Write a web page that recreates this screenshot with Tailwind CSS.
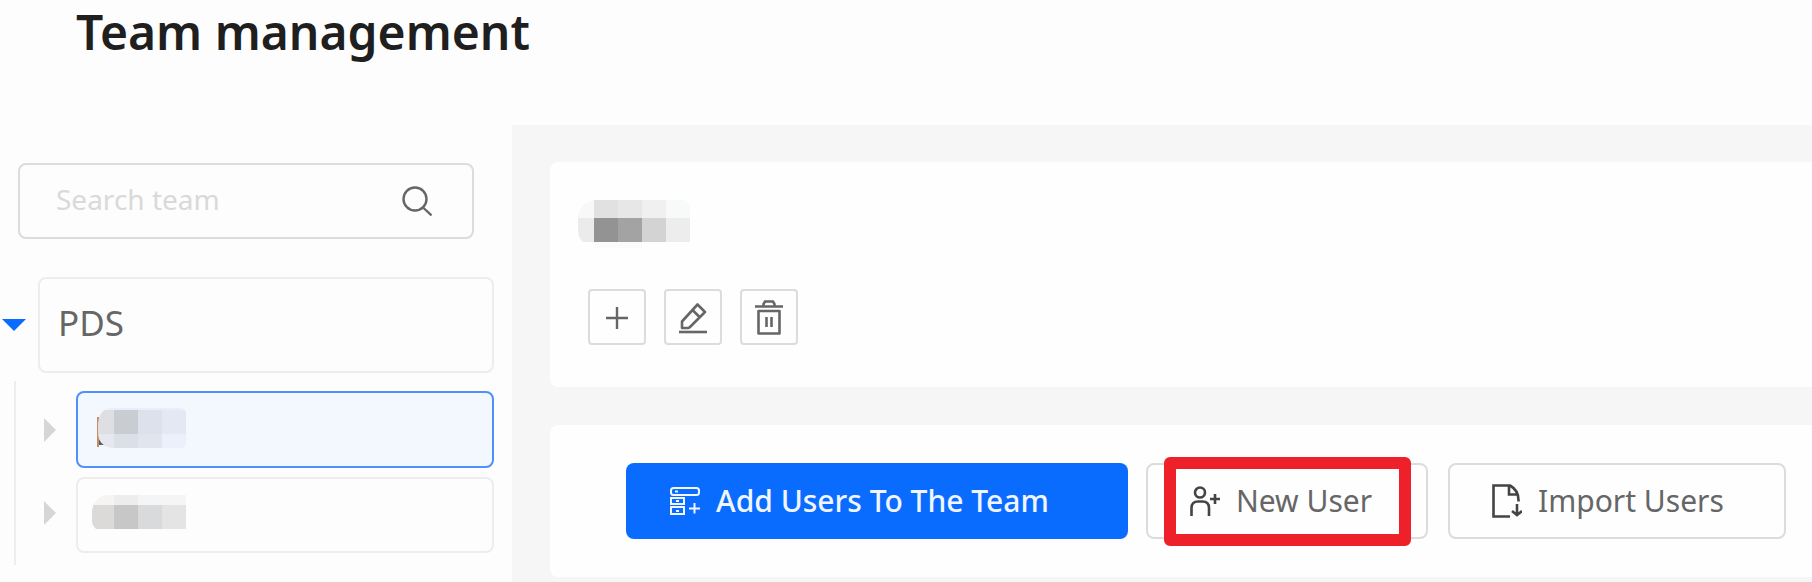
<!DOCTYPE html>
<html lang="en">
<head>
  <meta charset="UTF-8">
  <meta name="viewport" content="width=device-width, initial-scale=1.0">
  <title>Team management</title>
  <script src="https://cdn.jsdelivr.net/npm/@tailwindcss/browser@4"></script>
</head>
<body class="min-h-screen flex flex-col bg-[#fdfdfd] font-['Noto_Sans','Open_Sans',sans-serif] text-[#666] overflow-hidden">

  <!-- Header -->
  <header class="h-[125px] px-[76px]">
    <h1 class="text-[48px] leading-[64px] font-semibold text-[#1f1f1f]">Team management</h1>
  </header>

  <div class="flex flex-1">
    <!-- Sidebar -->
    <aside class="w-[512px] shrink-0 pt-[38px]">
      <form class="ml-[18px] mr-[38px] h-[76px] flex items-center border-2 border-[#dcdcdc] rounded-lg pl-9 pr-10">
        <input type="text" aria-label="Search team" placeholder="Search team" class="flex-1 min-w-0 pb-1 text-[28px] leading-10 placeholder:text-[#d9d9d9] outline-none">
        <button type="submit" aria-label="Search">
          <svg class="w-8 h-8" viewBox="0 0 32 32" fill="none" stroke="#666" stroke-width="2.400">
            <circle cx="15" cy="14" r="11.500"/>
            <path d="M23 22.500l8.500 8"/>
          </svg>
        </button>
      </form>

      <!-- Team tree -->
      <ul class="mt-[38px] pr-[18px]">
        <li>
          <div class="flex items-center">
            <button class="w-[38px] pl-[2px]" aria-label="Collapse PDS">
              <svg class="w-6 h-3" viewBox="0 0 24 12" fill="#0a6cff"><path d="M0 0h24L12 12z"/></svg>
            </button>
            <button class="flex-1 h-24 border-2 border-[#ededed] rounded-lg px-[18px] pb-1 text-left text-[35px] leading-10">PDS</button>
          </div>
          <ul class="ml-[14px] mt-2 pt-[10px] pb-3 border-l-2 border-[#eee] space-y-[9px]">
            <li class="flex items-center">
              <button class="w-[60px] pl-7" aria-label="Expand team">
                <svg class="w-3 h-6" viewBox="0 0 12 24" fill="#d6d6d6"><path d="M0 0v24l12-12z"/></svg>
              </button>
              <button class="flex-1 h-[77px] border-2 border-[#4f90fc] bg-[#f3f8ff] rounded-lg pl-[14px] pb-1" aria-label="Selected team">
                <svg class="w-24 h-10" viewBox="0 0 96 40">
                  <path d="M5 9h2v30H5z" fill="#c98b62"/>
                  <path d="M7 31l6 6H7z" fill="#555e68"/>
                  <clipPath id="mask-a"><path d="M20 0h68q6 0 6 6v28q0 6-6 6H20Q6 38 6 24v-9Q8 0 20 0z"/></clipPath>
                  <g clip-path="url(#mask-a)">
                    <path d="M6 0h88v2H6z" fill="#e8effc"/>
                    <path d="M6 2h16v24H6z" fill="#dedfe2"/>
                    <path d="M22 2h24v24H22z" fill="#c9ccd0"/>
                    <path d="M46 2h24v24H46z" fill="#dce1eb"/>
                    <path d="M70 2h24v24H70z" fill="#e4e8f2"/>
                    <path d="M6 26h16v14H6z" fill="#e5e8ef"/>
                    <path d="M22 26h24v14H22z" fill="#dbdfe8"/>
                    <path d="M46 26h24v14H46z" fill="#e0e5ee"/>
                    <path d="M70 26h24v14H70z" fill="#ecf0fb"/>
                  </g>
                </svg>
              </button>
            </li>
            <li class="flex items-center">
              <button class="w-[60px] pl-7 pb-1" aria-label="Expand team">
                <svg class="w-3 h-6" viewBox="0 0 12 24" fill="#d6d6d6"><path d="M0 0v24l12-12z"/></svg>
              </button>
              <button class="flex-1 h-[76px] border-2 border-[#ededed] rounded-lg pl-[14px] pb-1" aria-label="Team">
                <svg class="w-24 h-10" viewBox="0 0 96 40">
                  <clipPath id="mask-b"><path d="M18 2h76v34H4Q0 32 0 28V18Q2 2 18 2z"/></clipPath>
                  <g clip-path="url(#mask-b)">
                    <path d="M0 2h22v10H0z" fill="#f4f4f4"/>
                    <path d="M22 2h24v10H22z" fill="#ededed"/>
                    <path d="M46 2h48v10H46z" fill="#f5f5f5"/>
                    <path d="M0 12h22v24H0z" fill="#dbdad9"/>
                    <path d="M22 12h24v24H22z" fill="#c7c7c7"/>
                    <path d="M46 12h24v24H46z" fill="#d9dadb"/>
                    <path d="M70 12h24v24H70z" fill="#e4e4e4"/>
                  </g>
                </svg>
              </button>
            </li>
          </ul>
        </li>
      </ul>
    </aside>

    <!-- Main content -->
    <main class="flex-1 min-w-0 bg-[#f6f6f6] pt-[37px] pl-[38px] space-y-[38px]">
      <section class="h-[225px] bg-[#fefefe] rounded-l-lg pl-7 pt-[38px]">
        <svg class="w-28 h-12" viewBox="0 0 112 48">
          <clipPath id="mask-c"><path d="M16 0h90q6 2 6 8v34H5Q0 38 0 30V16Q2 2 16 0z"/></clipPath>
          <g clip-path="url(#mask-c)">
            <path d="M0 0h16v18H0z" fill="#f8f8f8"/>
            <path d="M16 0h24v18H16z" fill="#e1e1e1"/>
            <path d="M40 0h24v18H40z" fill="#e7e7e7"/>
            <path d="M64 0h24v18H64z" fill="#f0f0f0"/>
            <path d="M88 0h24v18H88z" fill="#f8fafa"/>
            <path d="M0 18h16v24H0z" fill="#ebebeb"/>
            <path d="M16 18h24v24H16z" fill="#939393"/>
            <path d="M40 18h24v24H40z" fill="#a3a3a3"/>
            <path d="M64 18h24v24H64z" fill="#d3d3d3"/>
            <path d="M88 18h24v24H88z" fill="#ededed"/>
          </g>
          <path d="M16 42h48v6H16z" fill="#fbfbfb"/>
        </svg>
        <div class="mt-[41px] ml-[10px] flex gap-[18px]">
          <button class="w-[58px] h-14 flex items-center justify-center border-2 border-[#dcdcdc] rounded-sm" aria-label="Add team">
            <svg class="w-8 h-9" viewBox="0 0 32 36" fill="none" stroke="#666" stroke-width="2.400"><path d="M16 8v22M5 19h22"/></svg>
          </button>
          <button class="w-[58px] h-14 flex items-center justify-center border-2 border-[#dcdcdc] rounded-sm" aria-label="Rename team">
            <svg class="w-8 h-9" viewBox="0 0 32 36" fill="none" stroke="#666" stroke-width="2.600">
              <path d="M2 33h28"/>
              <path d="M5 28.500v-6L20.500 5.500l7.500 7.500L13 28q-1 1-2 1H5zM15.500 11l7.500 7.500" stroke-linejoin="round"/>
            </svg>
          </button>
          <button class="w-[58px] h-14 flex items-center justify-center border-2 border-[#dcdcdc] rounded-sm" aria-label="Delete team">
            <svg class="w-8 h-9" viewBox="0 0 32 36" fill="none" stroke="#666" stroke-width="2.600">
              <path d="M2 7.500h28M10.500 7.500V5l1.500-2.500h8L21.500 5v2.500"/>
              <path d="M5.500 12h21v22.500h-21z" stroke-linejoin="round"/>
              <path d="M13.500 18v10M18.500 18v10"/>
            </svg>
          </button>
        </div>
      </section>

      <section class="h-[152px] bg-[#fefefe] rounded-l-lg pl-[76px] pt-[38px]">
        <div class="flex text-[30px] leading-10 whitespace-nowrap">
          <button class="w-[502px] h-[76px] flex items-center gap-4 pl-11 bg-[#0a6cff] text-[#f0f5ff] font-medium rounded-lg">
            <svg class="w-[30px] h-7 shrink-0" viewBox="0 0 30 28" fill="none" stroke="currentColor" stroke-width="2">
              <rect x="1" y="1" width="28" height="7" rx="2.500"/>
              <rect x="1" y="11" width="13" height="6"/>
              <rect x="1" y="20" width="13" height="7"/>
              <path d="M5 4.500h3M6 14h3M6 24h3M24.500 16v10.500M19 21.500h11"/>
            </svg>
            Add Users To The Team
          </button>
          <div class="relative ml-[18px]">
            <button class="w-[282px] h-[76px] flex items-center gap-4 pl-[42px] border-2 border-[#dcdcdc] rounded-lg">
              <svg class="w-[30px] h-[30px] shrink-0" viewBox="0 0 30 30" fill="none" stroke="#444" stroke-width="2.600">
                <circle cx="10" cy="6.500" r="5"/>
                <path d="M1.500 30V22q0-6.500 6.500-6.500h4.500q6.500 0 6.500 6.500v8"/>
                <path d="M25 8v10M20 13h10"/>
              </svg>
              New User
            </button>
            <!-- Highlight frame -->
            <div class="absolute -top-[6px] left-[18px] w-[247px] h-[89px] border-12 border-[#ee2029] rounded-md pointer-events-none"></div>
          </div>
          <button class="ml-5 w-[338px] h-[76px] flex items-center gap-4 pl-[42px] border-2 border-[#dcdcdc] rounded-lg">
            <svg class="w-[30px] h-[34px] shrink-0" viewBox="0 0 30 34" fill="none" stroke="#444" stroke-width="2.600">
              <path d="M18 32.500H1.500v-31H18q9 5 8.500 16"/>
              <path d="M17 1.500v9h8"/>
              <path d="M25 20v11M20 27l5 4 5-4"/>
            </svg>
            Import Users
          </button>
        </div>
      </section>
    </main>
  </div>

</body>
</html>
